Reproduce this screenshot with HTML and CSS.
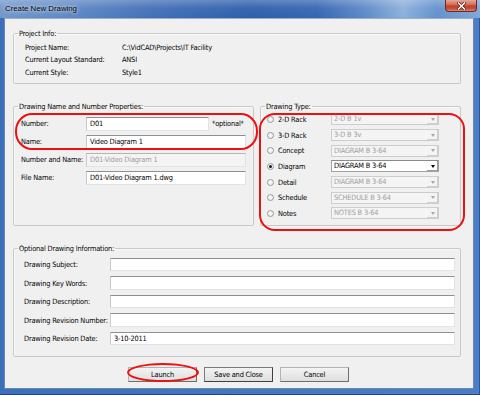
FILE: index.html
```html
<!DOCTYPE html>
<html>
<head>
<meta charset="utf-8">
<title>Create New Drawing</title>
<link rel="stylesheet" href="styles.css">
</head>
<body>
<div class="window">
  <div class="titlebar">
    <span class="title">Create New Drawing</span>
    <div class="close">
      <svg width="9" height="8" viewBox="0 0 9 8"><path d="M1.5 1 L7.5 7 M7.5 1 L1.5 7" stroke="#5a1a12" stroke-width="3" stroke-linecap="square"/><path d="M1.5 1 L7.5 7 M7.5 1 L1.5 7" stroke="#ffffff" stroke-width="1.5" stroke-linecap="square"/></svg>
    </div>
  </div>
  <div class="frame">
    <div class="client">
      <fieldset class="group project">
        <legend>Project Info:</legend>
        <div class="info-grid">
          <span>Project Name:</span><span>C:\VidCAD\Projects\IT Facility</span>
          <span>Current Layout Standard:</span><span>ANSI</span>
          <span>Current Style:</span><span>Style1</span>
        </div>
      </fieldset>

      <div class="mid">
        <fieldset class="group names">
          <legend>Drawing Name and Number Properties:</legend>
          <div class="names-body">
            <div class="form-row"><span class="lbl">Number:</span><div class="input short">D01</div><span class="note">*optional*</span></div>
            <div class="form-row"><span class="lbl">Name:</span><div class="input">Video Diagram 1</div></div>
            <div class="form-row"><span class="lbl">Number and Name:</span><div class="input disabled">D01-Video Diagram 1</div></div>
            <div class="form-row"><span class="lbl">File Name:</span><div class="input">D01-Video Diagram 1.dwg</div></div>
          </div>
        </fieldset>
        <fieldset class="group types">
          <legend>Drawing Type:</legend>
          <div class="types-body">
            <div class="type-row"><span class="radio"></span><span class="type-lbl">2-D Rack</span><div class="combo disabled"><span class="combo-text">2-D B 1v</span><span class="arrow"></span></div></div>
            <div class="type-row"><span class="radio"></span><span class="type-lbl">3-D Rack</span><div class="combo disabled"><span class="combo-text">3-D B 3v</span><span class="arrow"></span></div></div>
            <div class="type-row"><span class="radio"></span><span class="type-lbl">Concept</span><div class="combo disabled"><span class="combo-text">DIAGRAM B 3-64</span><span class="arrow"></span></div></div>
            <div class="type-row"><span class="radio checked"></span><span class="type-lbl">Diagram</span><div class="combo"><span class="combo-text">DIAGRAM B 3-64</span><span class="arrow"></span></div></div>
            <div class="type-row"><span class="radio"></span><span class="type-lbl">Detail</span><div class="combo disabled"><span class="combo-text">DIAGRAM B 3-64</span><span class="arrow"></span></div></div>
            <div class="type-row"><span class="radio"></span><span class="type-lbl">Schedule</span><div class="combo disabled"><span class="combo-text">SCHEDULE B 3-64</span><span class="arrow"></span></div></div>
            <div class="type-row"><span class="radio"></span><span class="type-lbl">Notes</span><div class="combo disabled"><span class="combo-text">NOTES B 3-64</span><span class="arrow"></span></div></div>
          </div>
        </fieldset>
        <div class="mark mark-names"></div>
        <div class="mark mark-types"></div>
      </div>

      <fieldset class="group optional">
        <legend>Optional Drawing Information:</legend>
        <div class="opt-body">
          <div class="opt-row"><span class="opt-lbl">Drawing Subject:</span><div class="input"></div></div>
          <div class="opt-row"><span class="opt-lbl">Drawing Key Words:</span><div class="input"></div></div>
          <div class="opt-row"><span class="opt-lbl">Drawing Description:</span><div class="input"></div></div>
          <div class="opt-row"><span class="opt-lbl">Drawing Revision Number:</span><div class="input"></div></div>
          <div class="opt-row"><span class="opt-lbl">Drawing Revision Date:</span><div class="input">3-10-2011</div></div>
        </div>
      </fieldset>

      <div class="buttons">
        <div class="btn-wrap">
          <div class="btn">Launch</div>
          <div class="mark mark-launch"></div>
        </div>
        <div class="btn default">Save and Close</div>
        <div class="btn">Cancel</div>
      </div>
    </div>
  </div>
</div>
</body>
</html>
```
FILE: styles.css
```css
* { box-sizing: border-box; }
html, body { margin: 0; padding: 0; }
body {
  width: 480px;
  height: 395px;
  overflow: hidden;
  font-family: "DejaVu Sans Condensed", "Liberation Sans", Arial, sans-serif;
  font-size: 7.35px;
  letter-spacing: -0.17px;
  color: #000;
  background: #3d71bb;
}
.window {
  width: 480px;
  height: 395px;
  display: flex;
  flex-direction: column;
  background: #4276bf;
}
.titlebar {
  height: 18px;
  flex: 0 0 18px;
  display: flex;
  align-items: flex-start;
  padding-left: 5px;
  background:
    linear-gradient(180deg, rgba(255,255,255,0.25) 0%, rgba(255,255,255,0.05) 45%, rgba(0,0,0,0) 100%),
    linear-gradient(90deg, #7297cb 0%, #5e89c5 14%, #426fb6 32%, #2d5fab 52%, #3566b2 66%, #5d8ac8 76%, #8cb0dc 84%, #6390cc 91%, #80a7d8 100%);
}
.title {
  margin-top: 4px;
  font-family: "Liberation Sans", Arial, sans-serif;
  font-size: 7.8px;
  letter-spacing: 0;
  color: #000;
  text-shadow: 0 0 3px rgba(255,255,255,0.9), 0 0 6px rgba(255,255,255,0.6);
}
.close {
  margin-left: auto;
  margin-right: 3px;
  width: 32px;
  height: 12px;
  border: 1px solid #6b2a22;
  border-top: none;
  border-radius: 0 0 4px 4px;
  background: linear-gradient(180deg, #e6a696 0%, #d4705c 40%, #c0402c 55%, #c85039 80%, #e08a6e 100%);
  display: flex;
  align-items: center;
  justify-content: center;
}
.close svg { display: block; }
.frame {
  flex: 1;
  padding: 0 6px 6px 4px;
  background: linear-gradient(90deg, #3a6fbb 0%, #4377c0 50%, #4a7ec6 100%);
  box-shadow: inset 0 -1px 0 #24467c, inset -1px 0 0 #2f5694;
}
.client {
  height: 100%;
  background: #f0f0f0;
  border: 1px solid #6f86a8;
  border-top-color: #9db0c9;
  padding: 9.5px 12px 0 8px;
  display: flex;
  flex-direction: column;
}
.group {
  margin: 0;
  padding: 0;
  min-width: 0;
  border: 1px solid #c9c9c9;
  border-radius: 2px;
  box-shadow: inset 1px 1px 0 #fafafa;
}
.group legend {
  margin-left: 4px;
  padding: 0 1px;
  line-height: 9px;
}
.info-grid {
  display: grid;
  grid-template-columns: 97px auto;
  grid-auto-rows: 12.5px;
  line-height: 12.5px;
  padding: 4px 0 4px 11px;
}
.mid {
  position: relative;
  display: flex;
  gap: 6px;
  margin-top: 18px;
}
.names { flex: 0 0 241px; }
.types { flex: 1; }
.names-body { padding: 3.5px 7px 0 7px; }
.form-row {
  height: 18px;
  display: flex;
  align-items: center;
}
.lbl { width: 65px; flex: 0 0 65px; white-space: nowrap; }
.input {
  flex: 1;
  height: 14px;
  line-height: 12px;
  padding: 0 3px;
  background: #fff;
  border: 1px solid #e2e3e6;
  border-top-color: #8e8f91;
  border-left-color: #c9cacd;
  color: #000;
  white-space: nowrap;
  overflow: hidden;
}
.input.short { flex: 0 0 123px; }
.input.disabled { background: #f4f4f4; color: #9b9b9b; border-top-color: #b5b5b5; }
.note { margin-left: 3px; white-space: nowrap; }
.types-body { padding: 0.5px 20px 4px 6px; }
.type-row {
  height: 15.7px;
  display: flex;
  align-items: center;
}
.radio {
  width: 7px;
  height: 7px;
  flex: 0 0 7px;
  border-radius: 50%;
  border: 1px solid #9a9a9a;
  background: radial-gradient(circle at 40% 40%, #ffffff 0%, #e4e4e4 100%);
  margin-right: 4px;
  position: relative;
}
.radio.checked::after {
  content: "";
  position: absolute;
  left: 1px;
  top: 1px;
  width: 3px;
  height: 3px;
  border-radius: 50%;
  background: #1a1a1a;
}
.type-lbl { width: 53px; flex: 0 0 53px; white-space: nowrap; }
.combo {
  width: 108px;
  height: 12px;
  display: flex;
  align-items: center;
  background: #fff;
  border: 1px solid #a3a3a3;
  border-top-color: #8a8a8a;
  color: #000;
}
.combo.disabled {
  background: #f4f4f4;
  border-color: #cdcdcd;
  color: #a0a0a0;
}
.combo-text { flex: 1; padding-left: 2px; line-height: 10px; white-space: nowrap; overflow: hidden; }
.arrow {
  width: 12px;
  height: 10px;
  flex: 0 0 12px;
  display: flex;
  align-items: center;
  justify-content: center;
  border-left: 1px solid #f8f8f8;
  box-shadow: inset -1px -1px 0 #9a9a9a;
}
.combo.disabled .arrow { box-shadow: inset -1px -1px 0 #cfcfcf; }
.arrow::after {
  content: "";
  border-left: 2.5px solid transparent;
  border-right: 2.5px solid transparent;
  border-top: 3px solid #000;
}
.combo.disabled .arrow::after { border-top-color: #a8a8a8; }
.optional { margin-top: 17.5px; }
.opt-body { padding: 2.5px 5px 8px 10px; }
.opt-row {
  height: 18.5px;
  display: flex;
  align-items: center;
}
.opt-lbl { width: 86px; flex: 0 0 86px; white-space: nowrap; }
.opt-row .input { height: 13.5px; }
.buttons {
  margin-top: 10.5px;
  display: flex;
  justify-content: center;
  gap: 7px;
  padding-left: 3px;
}
.btn-wrap { position: relative; }
.btn {
  width: 69px;
  height: 15px;
  display: flex;
  align-items: center;
  justify-content: center;
  background: linear-gradient(180deg, #f3f3f3 0%, #e9e9e9 50%, #dedede 100%);
  border: 1px solid #8c8c8c;
  border-color: #b3b3b3 #6e6e6e #6e6e6e #b3b3b3;
  color: #000;
  white-space: nowrap;
}
.btn.default { border-color: #7a7a7a #404040 #404040 #7a7a7a; }
.mark {
  position: absolute;
  border: 2px solid #ec1010;
  pointer-events: none;
}
.mark-names {
  left: 2px;
  top: 10.5px;
  width: 243px;
  height: 37px;
  border-radius: 17px / 18px;
}
.mark-types {
  left: 246px;
  top: 10.5px;
  width: 206px;
  height: 118px;
  border-radius: 16px;
}
.mark-launch {
  left: -1px;
  top: -4px;
  width: 72px;
  height: 19px;
  border-radius: 50%;
}
```
